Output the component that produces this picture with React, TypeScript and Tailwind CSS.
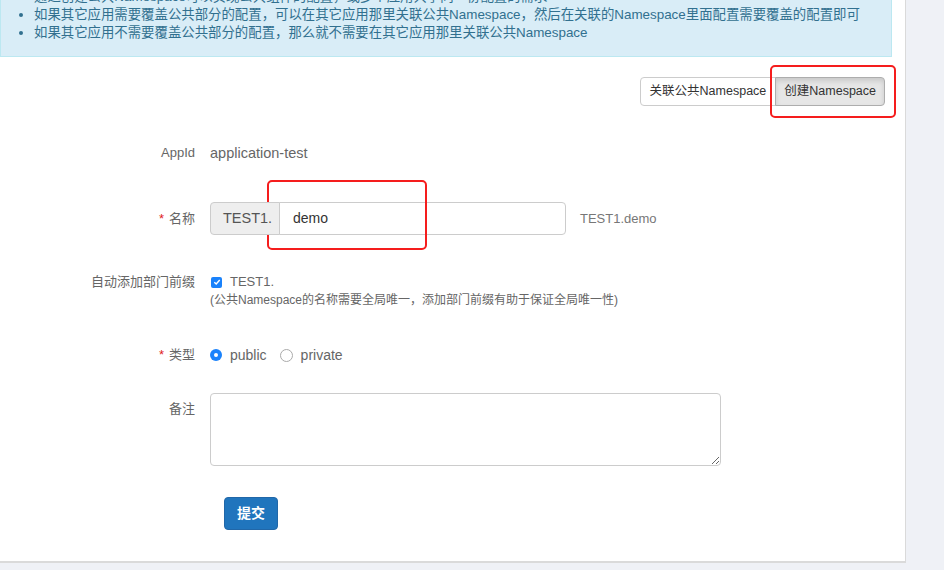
import React from "react";

const font = { fontFamily: '"Liberation Sans", "Noto Sans CJK SC", sans-serif' };

function FormRow({
  label,
  required,
  top = false,
  className = "",
  children,
}: {
  label: string;
  required?: boolean;
  top?: boolean;
  className?: string;
  children: React.ReactNode;
}) {
  return (
    <div className={`flex ${top ? "items-start" : "items-center"} ${className}`}>
      <div
        className={`w-[195px] shrink-0 text-right text-[13px] leading-[18px] text-[#666] ${
          top ? "pt-[7px]" : ""
        }`}
      >
        {required ? <span className="mr-[5px] text-[#e02020]">*</span> : null}
        {label}
      </div>
      <div className="ml-[15px] flex-1">{children}</div>
    </div>
  );
}

export default function App() {
  return (
    <div className="relative h-[570px] w-[944px] overflow-hidden bg-[#eff1f6]" style={font}>
      <div className="w-[906px] border-b-2 border-r border-[#dadada] bg-white pb-[31px]">
        {/* info alert, scrolled so its first line is cut */}
        <div className="mr-[13px] -mt-[12px] border border-t-0 border-[#bce8f1] bg-[#d9edf7] pb-[14px] text-[13.4px] leading-[18px] text-[#31708f]">
          <ul className="list-disc pl-[33px] marker:text-[#31708f]">
            <li>通过创建公共Namespace可以实现公共组件的配置，或多个应用共享同一份配置的需求</li>
            <li>如果其它应用需要覆盖公共部分的配置，可以在其它应用那里关联公共Namespace，然后在关联的Namespace里面配置需要覆盖的配置即可</li>
            <li>如果其它应用不需要覆盖公共部分的配置，那么就不需要在其它应用那里关联公共Namespace</li>
          </ul>
        </div>

        <div className="mr-[20px] mt-[20px] flex justify-end">
          <button className="h-[29px] rounded-l-[4px] border border-[#ccc] bg-white px-[9px] text-[12.5px] text-[#333]">
            关联公共Namespace
          </button>
          <button className="-ml-px h-[29px] rounded-r-[4px] border border-[#adadad] bg-[#e6e6e6] px-[8px] text-[12.5px] text-[#333] shadow-[inset_0_3px_5px_rgba(0,0,0,0.125)]">
            创建Namespace
          </button>
        </div>

        <FormRow label="AppId" className="mt-[35px]">
          <span className="text-[14.5px] leading-[18px] text-[#666]">application-test</span>
        </FormRow>

        <FormRow label="名称" required className="mt-[37px]">
          <div className="flex items-center">
            <div className="flex h-[33px] w-[356px]">
              <span className="relative z-10 flex w-[70px] items-center whitespace-nowrap rounded-l-[4px] border border-[#ccc] bg-[#eee] pl-[12px] text-[14.5px] text-[#555]">
                TEST1.
              </span>
              <div className="-ml-px flex flex-1 items-center rounded-r-[4px] border border-[#ccc] bg-white pl-[13px] text-[14px] text-[#333]">
                demo
              </div>
            </div>
            <span className="ml-[14px] text-[13px] text-[#777]">TEST1.demo</span>
          </div>
        </FormRow>

        <FormRow label="自动添加部门前缀" top className="mt-[38px] [&>div:first-child]:pt-0">
          <div className="text-[13px] leading-[18px] text-[#666]">
            <div className="flex items-center">
              <span className="ml-px flex h-[11px] w-[11px] items-center justify-center rounded-[2px] bg-[#1a82fb]">
                <svg width="8" height="8" viewBox="0 0 8 8">
                  <path d="M1.3 4.2 L3.2 6 L6.7 2" fill="none" stroke="white" strokeWidth="1.4" />
                </svg>
              </span>
              <span className="ml-[8px]">TEST1.</span>
            </div>
            <div className="text-[12px]">(公共Namespace的名称需要全局唯一，添加部门前缀有助于保证全局唯一性)</div>
          </div>
        </FormRow>

        <FormRow label="类型" required className="mt-[37px]">
          <div className="flex items-center text-[14px] leading-[18px] text-[#666]">
            <span className="flex h-[12px] w-[12px] items-center justify-center rounded-full bg-[#1a82fb]">
              <span className="h-[4px] w-[4px] rounded-full bg-white" />
            </span>
            <span className="ml-[8px]">public</span>
            <span className="ml-[13px] h-[13px] w-[13px] rounded-full border border-[#aaa] bg-white" />
            <span className="ml-[8px]">private</span>
          </div>
        </FormRow>

        <FormRow label="备注" top className="mt-[29px]">
          <textarea className="block h-[73px] w-[511px] resize-y rounded-[4px] border border-[#ccc] bg-white" />
        </FormRow>

        <div className="ml-[224px] mt-[31px]">
          <button className="h-[33px] w-[54px] rounded-[4px] border border-[#2167a8] bg-[#2075bd] text-[14px] font-bold text-white">
            提交
          </button>
        </div>
      </div>

      {/* red annotation boxes */}
      <div className="pointer-events-none absolute left-[770px] top-[65px] h-[53px] w-[126px] rounded-[5px] border-[2.5px] border-[#f51d1d]" />
      <div className="pointer-events-none absolute left-[267px] top-[180px] h-[70px] w-[160px] rounded-[5px] border-[2.5px] border-[#f51d1d]" />
    </div>
  );
}
